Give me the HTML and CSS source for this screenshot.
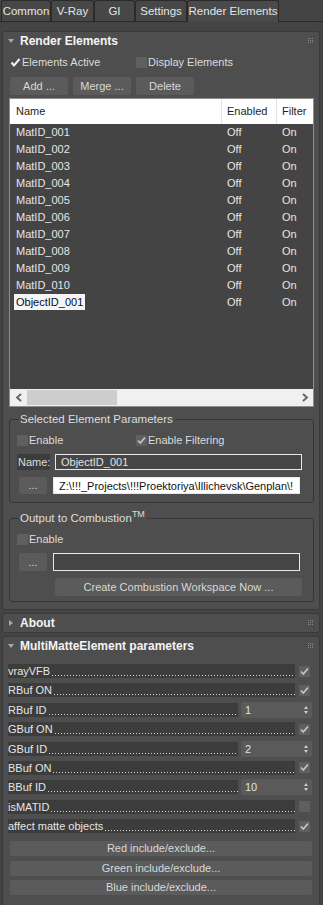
FILE: index.html
```html
<!DOCTYPE html>
<html lang="en">
<head>
<meta charset="UTF-8" />
<title>Render Setup</title>
<link rel="stylesheet" href="styles.css">
</head>
<body>

<div class="tabs">
  <div class="tab t-common">Common</div>
  <div class="tab t-vray">V-Ray</div>
  <div class="tab t-gi">GI</div>
  <div class="tab t-settings">Settings</div>
  <div class="tab t-re active">Render Elements</div>
</div>

<div class="rollout">
  <div class="roll-head">
    <span class="tri-down"></span>
    <span class="roll-title">Render Elements</span>
    <svg class="grip" width="6" height="6" viewBox="0 0 6 6"><g fill="#8a8a8a"><rect x="0" y="0" width="1" height="1"/><rect x="2" y="0" width="1" height="1"/><rect x="4" y="0" width="1" height="1"/><rect x="0" y="2" width="1" height="1"/><rect x="2" y="2" width="1" height="1"/><rect x="4" y="2" width="1" height="1"/><rect x="0" y="4" width="1" height="1"/><rect x="2" y="4" width="1" height="1"/><rect x="4" y="4" width="1" height="1"/></g></svg>
  </div>
  <div class="re-body">
    <div class="check-row">
      <div class="chk w-active"><span class="box bare"><svg width="11" height="11" viewBox="0 0 11 11"><path d="M1.5 5.5 L4 8.5 L9.5 2" fill="none" stroke="#f2f2f2" stroke-width="2"/></svg></span>Elements Active</div>
      <div class="chk"><span class="box"></span>Display Elements</div>
    </div>
    <div class="btn-row">
      <div class="btn">Add ...</div>
      <div class="btn">Merge ...</div>
      <div class="btn">Delete</div>
    </div>

    <div class="list">
      <div class="list-head">
        <div class="c-name">Name</div>
        <div class="c-en">Enabled</div>
        <div class="c-fi">Filter</div>
      </div>
      <div class="list-rows">
        <div class="lrow"><div class="c-name">MatID_001</div><div class="c-en">Off</div><div class="c-fi">On</div></div>
        <div class="lrow"><div class="c-name">MatID_002</div><div class="c-en">Off</div><div class="c-fi">On</div></div>
        <div class="lrow"><div class="c-name">MatID_003</div><div class="c-en">Off</div><div class="c-fi">On</div></div>
        <div class="lrow"><div class="c-name">MatID_004</div><div class="c-en">Off</div><div class="c-fi">On</div></div>
        <div class="lrow"><div class="c-name">MatID_005</div><div class="c-en">Off</div><div class="c-fi">On</div></div>
        <div class="lrow"><div class="c-name">MatID_006</div><div class="c-en">Off</div><div class="c-fi">On</div></div>
        <div class="lrow"><div class="c-name">MatID_007</div><div class="c-en">Off</div><div class="c-fi">On</div></div>
        <div class="lrow"><div class="c-name">MatID_008</div><div class="c-en">Off</div><div class="c-fi">On</div></div>
        <div class="lrow"><div class="c-name">MatID_009</div><div class="c-en">Off</div><div class="c-fi">On</div></div>
        <div class="lrow"><div class="c-name">MatID_010</div><div class="c-en">Off</div><div class="c-fi">On</div></div>
        <div class="lrow"><div class="c-name"><span class="sel">ObjectID_001</span></div><div class="c-en">Off</div><div class="c-fi">On</div></div>
      </div>
      <div class="hscroll">
        <div class="arrow">
          <svg width="8" height="9" viewBox="0 0 8 9"><path d="M6 1 L2 4.5 L6 8" fill="none" stroke="#606060" stroke-width="1.8"/></svg>
        </div>
        <div class="thumb"></div>
        <div class="track"></div>
        <div class="arrow">
          <svg width="8" height="9" viewBox="0 0 8 9"><path d="M2 1 L6 4.5 L2 8" fill="none" stroke="#606060" stroke-width="1.8"/></svg>
        </div>
      </div>
    </div>

    <fieldset class="group g-sel">
      <legend>Selected Element Parameters</legend>
      <div class="check-row in-group">
        <div class="chk w-enable"><span class="box"></span>Enable</div>
        <div class="chk"><span class="box"><svg width="11" height="11" viewBox="0 0 11 11"><path d="M2 5.5 L4.3 8 L9 2.5" fill="none" stroke="#c4c4c4" stroke-width="1.8"/></svg></span>Enable Filtering</div>
      </div>
      <div class="field-row name-row">
        <div class="name-label">Name:</div>
        <div class="input dark">ObjectID_001</div>
      </div>
      <div class="field-row path-row">
        <div class="btn dots">...</div>
        <div class="input light">Z:\!!!_Projects\!!!Proektoriya\Illichevsk\Genplan\!</div>
      </div>
    </fieldset>

    <fieldset class="group g-comb">
      <legend>Output to Combustion<sup>TM</sup></legend>
      <div class="check-row in-group">
        <div class="chk"><span class="box"></span>Enable</div>
      </div>
      <div class="field-row comb-row">
        <div class="btn dots">...</div>
        <div class="input dark"></div>
      </div>
      <div class="field-row create-row">
        <div class="btn create">Create Combustion Workspace Now ...</div>
      </div>
    </fieldset>
  </div>
</div>

<div class="rollout closed">
  <div class="roll-head">
    <span class="tri-right"></span>
    <span class="roll-title">About</span>
    <svg class="grip" width="6" height="6" viewBox="0 0 6 6"><g fill="#8a8a8a"><rect x="0" y="0" width="1" height="1"/><rect x="2" y="0" width="1" height="1"/><rect x="4" y="0" width="1" height="1"/><rect x="0" y="2" width="1" height="1"/><rect x="2" y="2" width="1" height="1"/><rect x="4" y="2" width="1" height="1"/><rect x="0" y="4" width="1" height="1"/><rect x="2" y="4" width="1" height="1"/><rect x="4" y="4" width="1" height="1"/></g></svg>
  </div>
</div>

<div class="rollout mm">
  <div class="roll-head">
    <span class="tri-down"></span>
    <span class="roll-title">MultiMatteElement parameters</span>
    <svg class="grip" width="6" height="6" viewBox="0 0 6 6"><g fill="#8a8a8a"><rect x="0" y="0" width="1" height="1"/><rect x="2" y="0" width="1" height="1"/><rect x="4" y="0" width="1" height="1"/><rect x="0" y="2" width="1" height="1"/><rect x="2" y="2" width="1" height="1"/><rect x="4" y="2" width="1" height="1"/><rect x="0" y="4" width="1" height="1"/><rect x="2" y="4" width="1" height="1"/><rect x="4" y="4" width="1" height="1"/></g></svg>
  </div>
  <div class="mm-body">
    <div class="prow">
      <div class="pbar"><span>vrayVFB</span><span class="lead"></span></div>
      <span class="box on"><svg width="11" height="11" viewBox="0 0 11 11"><path d="M2 5.5 L4.3 8 L9 2.5" fill="none" stroke="#c4c4c4" stroke-width="1.8"/></svg></span>
    </div>
    <div class="prow">
      <div class="pbar"><span>RBuf ON</span><span class="lead"></span></div>
      <span class="box on"><svg width="11" height="11" viewBox="0 0 11 11"><path d="M2 5.5 L4.3 8 L9 2.5" fill="none" stroke="#c4c4c4" stroke-width="1.8"/></svg></span>
    </div>
    <div class="prow">
      <div class="pbar"><span>RBuf ID</span><span class="lead"></span></div>
      <div class="spin"><span>1</span><span class="spin-arrows"><i class="up"></i><i class="dn"></i></span></div>
    </div>
    <div class="prow">
      <div class="pbar"><span>GBuf ON</span><span class="lead"></span></div>
      <span class="box on"><svg width="11" height="11" viewBox="0 0 11 11"><path d="M2 5.5 L4.3 8 L9 2.5" fill="none" stroke="#c4c4c4" stroke-width="1.8"/></svg></span>
    </div>
    <div class="prow">
      <div class="pbar"><span>GBuf ID</span><span class="lead"></span></div>
      <div class="spin"><span>2</span><span class="spin-arrows"><i class="up"></i><i class="dn"></i></span></div>
    </div>
    <div class="prow">
      <div class="pbar"><span>BBuf ON</span><span class="lead"></span></div>
      <span class="box on"><svg width="11" height="11" viewBox="0 0 11 11"><path d="M2 5.5 L4.3 8 L9 2.5" fill="none" stroke="#c4c4c4" stroke-width="1.8"/></svg></span>
    </div>
    <div class="prow">
      <div class="pbar"><span>BBuf ID</span><span class="lead"></span></div>
      <div class="spin"><span>10</span><span class="spin-arrows"><i class="up"></i><i class="dn"></i></span></div>
    </div>
    <div class="prow">
      <div class="pbar"><span>isMATID</span><span class="lead"></span></div>
      <span class="box"></span>
    </div>
    <div class="prow">
      <div class="pbar"><span>affect matte objects</span><span class="lead"></span></div>
      <span class="box on"><svg width="11" height="11" viewBox="0 0 11 11"><path d="M2 5.5 L4.3 8 L9 2.5" fill="none" stroke="#c4c4c4" stroke-width="1.8"/></svg></span>
    </div>
    <div class="btn wide first">Red include/exclude...</div>
    <div class="btn wide">Green include/exclude...</div>
    <div class="btn wide">Blue include/exclude...</div>
  </div>
</div>

</body>
</html>
```

FILE: styles.css
```css
body {
  margin: 0;
  background: #444444;
  color: #dcdcdc;
  font-family: "Liberation Sans", Arial, sans-serif;
  font-size: 11px;
  width: 323px;
  overflow: hidden;
}

/* tabs */
.tabs {
  display: flex;
  height: 21px;
  border-bottom: 1px solid #2a2a2a;
  padding-left: 1px;
}
.tab {
  box-sizing: border-box;
  height: 21px;
  border: 1px solid #2a2a2a;
  border-bottom: none;
  border-radius: 3px 3px 0 0;
  text-align: center;
  line-height: 21px;
  font-size: 11.5px;
  color: #e4e4e4;
  background: #474747;
}
.t-common { width: 50px; }
.t-vray { width: 43px; }
.t-gi { width: 41px; }
.t-settings { width: 52px; }
.t-re { width: 92px; }
.tab.active {
  height: 22px;
  margin-bottom: -1px;
  background: #4a4a4a;
}

/* rollouts */
.rollout {
  box-sizing: border-box;
  width: 318px;
  margin: 9px 0 0 2px;
  background: #4e4e4e;
  border: 1px solid #3a3a3a;
  border-radius: 3px;
}
.rollout.closed { margin-top: 3px; }
.rollout.mm { margin-top: 3px; }
.roll-head {
  display: flex;
  align-items: center;
  height: 18px;
  padding-left: 5px;
}
.tri-down {
  width: 0;
  height: 0;
  border-left: 3px solid transparent;
  border-right: 3px solid transparent;
  border-top: 4px solid #a8a8a8;
  margin-right: 6px;
}
.tri-right {
  width: 0;
  height: 0;
  border-top: 3px solid transparent;
  border-bottom: 3px solid transparent;
  border-left: 4px solid #a8a8a8;
  margin-left: 1px;
  margin-right: 7px;
}
.roll-title {
  flex: 1;
  font-weight: bold;
  font-size: 12px;
  color: #f4f4f4;
}
.grip { margin-right: 5px; }

/* render elements body */
.re-body {
  padding: 0 5px 7px 6px;
}
.check-row {
  display: flex;
  align-items: center;
  height: 12px;
  margin-top: 6px;
  padding-left: 1px;
}
.chk {
  display: flex;
  align-items: center;
}
.w-active { width: 126px; }
.w-enable { width: 119px; }
.box {
  display: inline-block;
  width: 11px;
  height: 11px;
  background: #5f5f5f;
  margin-right: 1px;
  flex: none;
}
.box svg { display: block; }
.box.bare { background: transparent; }

.btn-row {
  display: flex;
  gap: 5px;
  margin: 9px 0 0 1px;
}
.btn {
  box-sizing: border-box;
  height: 18px;
  line-height: 18px;
  background: #5b5b5b;
  border-radius: 2px;
  color: #d8d8d8;
  text-align: center;
}
.btn-row .btn { width: 58px; }

/* list */
.list {
  margin-top: 3px;
  height: 309px;
  box-sizing: border-box;
  border: 1px solid #8e8e8e;
  background: #444444;
  display: flex;
  flex-direction: column;
}
.list-head {
  display: flex;
  height: 25px;
  line-height: 25px;
  background: #ffffff;
  color: #1e1e1e;
}
.list-head .c-en, .list-head .c-fi { border-left: 1px solid #e3e3e3; }
.c-name { width: 205px; padding-left: 6px; }
.c-en { width: 49px; padding-left: 5px; }
.c-fi { flex: 1; padding-left: 5px; }
.lrow .c-en, .lrow .c-fi { padding-left: 6px; }
.list-rows { flex: 1; }
.lrow {
  display: flex;
  height: 17px;
  line-height: 17px;
  color: #e6e6e6;
}
.sel {
  background: #f5f5f5;
  color: #0a0a2a;
  margin-left: -2px;
  padding: 2px;
}
.hscroll {
  display: flex;
  align-items: center;
  height: 17px;
  background: #f0f0f0;
}
.arrow {
  width: 17px;
  display: flex;
  justify-content: center;
}
.thumb {
  width: 90px;
  height: 15px;
  background: #cdcdcd;
}
.track { flex: 1; }

/* groups */
.group {
  margin: 6px 0 0 0;
  padding: 0 7px 8px 7px;
  border: 1px solid #363636;
  border-radius: 3px;
  min-width: 0;
}
.group legend {
  padding: 0 2px 0 1px;
  margin-left: 2px;
  line-height: 13px;
  font-size: 11.5px;
  color: #dedede;
}
.group legend sup {
  font-size: 9px;
  vertical-align: 5px;
  line-height: 0;
}
.check-row.in-group {
  margin-top: 8px;
  padding-left: 0;
}
.field-row {
  display: flex;
  gap: 8px;
  align-items: center;
}
.name-row { margin-top: 8px; height: 16px; }
.path-row { margin-top: 7px; height: 17px; }
.name-label {
  width: 33px;
  height: 16px;
  line-height: 16px;
  padding-left: 1px;
  box-sizing: border-box;
  background: #3c3c3c;
  margin-right: -3px;
}
.input {
  box-sizing: border-box;
  width: 247px;
  height: 100%;
  padding-left: 5px;
  white-space: nowrap;
  overflow: hidden;
  border: 1px solid #e8e8e8;
  line-height: 15px;
}
.input.dark { background: #454545; color: #e2e2e2; }
.input.light { background: #ffffff; color: #111111; line-height: 16px; }
.btn.dots {
  width: 28px;
  height: 17px;
  line-height: 17px;
  margin-left: 2px;
  margin-right: -2px;
}
.g-comb { margin-top: 9px; padding-bottom: 5px; }
.comb-row { margin-top: 8px; height: 18px; }
.comb-row .btn.dots { height: 18px; line-height: 18px; }
.create-row { margin-top: 7px; padding-left: 38px; }
.btn.create { width: 247px; }

/* multimatte */
.mm-body {
  padding: 8px 6px 6px 5px;
}
.prow {
  display: flex;
  align-items: center;
  height: 16px;
  margin-bottom: 3.4px;
}
.pbar {
  flex: 1;
  display: flex;
  height: 14px;
  line-height: 14px;
  background: #3c3c3c;
  color: #e6e6e6;
  overflow: hidden;
  white-space: nowrap;
}
/* dotted leader after the label */
.lead {
  flex: 1;
  margin-left: 2px;
  background-image: linear-gradient(to right, #d6d6d6 1px, transparent 1px);
  background-size: 3px 1px;
  background-repeat: repeat-x;
  background-position: 0 11px;
}
.prow .box {
  margin: 0 3px 0 4px;
}
.spin {
  display: flex;
  align-items: center;
  justify-content: space-between;
  box-sizing: border-box;
  width: 71px;
  height: 16px;
  margin: 0 1px 0 3px;
  padding: 0 4px;
  background: #5a5a5a;
  border-radius: 2px;
  color: #e0e0e0;
}
.spin-arrows {
  display: flex;
  flex-direction: column;
  gap: 2px;
}
.spin-arrows i {
  display: block;
  width: 0;
  height: 0;
  border-left: 2.5px solid transparent;
  border-right: 2.5px solid transparent;
}
.spin-arrows .up { border-bottom: 3px solid #cfcfcf; }
.spin-arrows .dn { border-top: 3px solid #cfcfcf; }
.btn.wide {
  height: 15px;
  line-height: 15px;
  margin: 0 1px 4.5px 2px;
}
.btn.wide.first { margin-top: 7px; }
```
